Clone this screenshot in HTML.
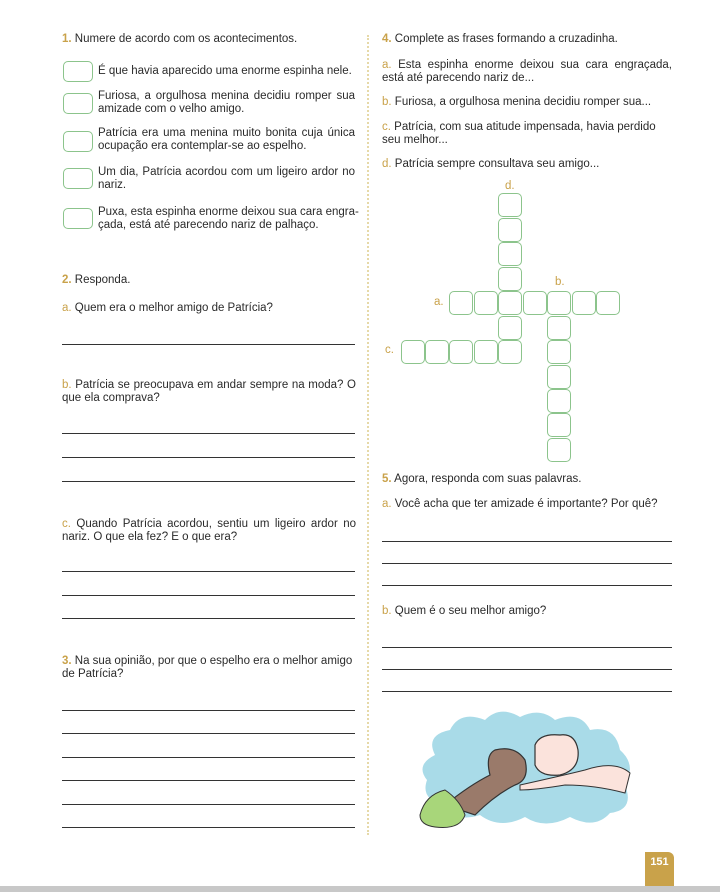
<!DOCTYPE html>
<html><head><meta charset="utf-8"><style>
body{margin:0;width:720px;height:892px;background:#fff;position:relative;overflow:hidden;font-family:"Liberation Sans",sans-serif;color:#2a2a2a;font-size:11.5px;line-height:13px}
.a{position:absolute}
.n{color:#c9a24a;font-weight:bold}
.l{color:#c9a24a}
.u{position:absolute;height:1px;background:#333}
.bx{position:absolute;width:28px;height:19px;border:1.3px solid #8cc48c;border-radius:5px}
.c{position:absolute;border:1.3px solid #8cc48c;border-radius:5px;box-sizing:border-box;width:24px;height:24px}
.j{text-align:justify}
</style></head><body>
<div class="a" style="left:367px;top:35px;height:800px;border-left:2px dotted #e6d9a8"></div>

<div class="a" style="left:62px;top:33px"><span class="n">1.</span> Numere de acordo com os acontecimentos.</div>
<div class="bx" style="left:63px;top:61px"></div><div class="a" style="left:98px;top:65px">É que havia aparecido uma enorme espinha nele.</div>
<div class="bx" style="left:63px;top:93px"></div><div class="a j" style="left:98px;top:90px;width:257px">Furiosa, a orgulhosa menina decidiu romper sua amizade com o velho amigo.</div>
<div class="bx" style="left:63px;top:131px"></div><div class="a j" style="left:98px;top:127px;width:257px">Patrícia era uma menina muito bonita cuja única ocupação era contemplar-se ao espelho.</div>
<div class="bx" style="left:63px;top:168px"></div><div class="a j" style="left:98px;top:166px;width:257px">Um dia, Patrícia acordou com um ligeiro ardor no nariz.</div>
<div class="bx" style="left:63px;top:208px"></div><div class="a" style="left:98px;top:206px;width:262px">Puxa, esta espinha enorme deixou sua cara engra-<br>çada, está até parecendo nariz de palhaço.</div>

<div class="a" style="left:62px;top:274px"><span class="n">2.</span> Responda.</div>
<div class="a" style="left:62px;top:302px"><span class="l">a.</span> Quem era o melhor amigo de Patrícia?</div>
<div class="u" style="left:62px;top:344px;width:293px"></div>
<div class="a j" style="left:62px;top:379px;width:294px"><span class="l">b.</span> Patrícia se preocupava em andar sempre na moda? O que ela comprava?</div>
<div class="u" style="left:62px;top:433px;width:293px"></div>
<div class="u" style="left:62px;top:457px;width:293px"></div>
<div class="u" style="left:62px;top:481px;width:293px"></div>
<div class="a j" style="left:62px;top:518px;width:294px"><span class="l">c.</span> Quando Patrícia acordou, sentiu um ligeiro ardor no nariz. O que ela fez? E o que era?</div>
<div class="u" style="left:62px;top:571px;width:293px"></div>
<div class="u" style="left:62px;top:595px;width:293px"></div>
<div class="u" style="left:62px;top:618px;width:293px"></div>
<div class="a" style="left:62px;top:655px;width:300px"><span class="n">3.</span> Na sua opinião, por que o espelho era o melhor amigo de Patrícia?</div>
<div class="u" style="left:62px;top:710px;width:293px"></div>
<div class="u" style="left:62px;top:733px;width:293px"></div>
<div class="u" style="left:62px;top:757px;width:293px"></div>
<div class="u" style="left:62px;top:780px;width:293px"></div>
<div class="u" style="left:62px;top:804px;width:293px"></div>
<div class="u" style="left:62px;top:827px;width:293px"></div>

<div class="a" style="left:382px;top:33px"><span class="n">4.</span> Complete as frases formando a cruzadinha.</div>
<div class="a j" style="left:382px;top:59px;width:290px"><span class="l">a.</span> Esta espinha enorme deixou sua cara engraçada, está até parecendo nariz de...</div>
<div class="a" style="left:382px;top:96px"><span class="l">b.</span> Furiosa, a orgulhosa menina decidiu romper sua...</div>
<div class="a" style="left:382px;top:121px;width:292px"><span class="l">c.</span> Patrícia, com sua atitude impensada, havia perdido seu melhor...</div>
<div class="a" style="left:382px;top:158px"><span class="l">d.</span> Patrícia sempre consultava seu amigo...</div>

<div class="a l" style="left:505px;top:180px">d.</div>
<div class="a l" style="left:434px;top:296px">a.</div>
<div class="a l" style="left:555px;top:276px">b.</div>
<div class="a l" style="left:385px;top:344px">c.</div>
<div class="c" style="left:498px;top:193px"></div>
<div class="c" style="left:498px;top:218px"></div>
<div class="c" style="left:498px;top:242px"></div>
<div class="c" style="left:498px;top:267px"></div>
<div class="c" style="left:449px;top:291px"></div>
<div class="c" style="left:474px;top:291px"></div>
<div class="c" style="left:498px;top:291px"></div>
<div class="c" style="left:523px;top:291px"></div>
<div class="c" style="left:547px;top:291px"></div>
<div class="c" style="left:572px;top:291px"></div>
<div class="c" style="left:596px;top:291px"></div>
<div class="c" style="left:498px;top:316px"></div>
<div class="c" style="left:401px;top:340px"></div>
<div class="c" style="left:425px;top:340px"></div>
<div class="c" style="left:449px;top:340px"></div>
<div class="c" style="left:474px;top:340px"></div>
<div class="c" style="left:498px;top:340px"></div>
<div class="c" style="left:547px;top:316px"></div>
<div class="c" style="left:547px;top:340px"></div>
<div class="c" style="left:547px;top:365px"></div>
<div class="c" style="left:547px;top:389px"></div>
<div class="c" style="left:547px;top:413px"></div>
<div class="c" style="left:547px;top:438px"></div>

<div class="a" style="left:382px;top:473px"><span class="n">5.</span> Agora, responda com suas palavras.</div>
<div class="a" style="left:382px;top:498px"><span class="l">a.</span> Você acha que ter amizade é importante? Por quê?</div>
<div class="u" style="left:382px;top:541px;width:290px"></div>
<div class="u" style="left:382px;top:563px;width:290px"></div>
<div class="u" style="left:382px;top:585px;width:290px"></div>
<div class="a" style="left:382px;top:605px"><span class="l">b.</span> Quem é o seu melhor amigo?</div>
<div class="u" style="left:382px;top:647px;width:290px"></div>
<div class="u" style="left:382px;top:669px;width:290px"></div>
<div class="u" style="left:382px;top:691px;width:290px"></div>

<svg class="a" style="left:415px;top:705px" width="222" height="125" viewBox="0 0 222 125">
<path d="M20 50 Q10 30 35 25 Q45 5 70 15 Q85 0 105 12 Q125 2 140 15 Q165 5 175 25 Q200 20 205 45 Q222 60 210 80 Q220 105 195 108 Q180 125 155 112 Q130 125 110 112 Q85 125 65 110 Q40 118 30 100 Q5 95 12 75 Q0 60 20 50Z" fill="#a9dbe8"/>
<path d="M105 80 Q150 70 170 65 Q200 55 215 68 L210 88 Q180 80 150 80 Q120 85 105 85Z" fill="#fbe3dc" stroke="#333" stroke-width="1"/>
<path d="M120 40 Q125 28 145 30 Q160 28 163 45 Q165 65 145 70 Q125 72 120 60Z" fill="#fbe3dc" stroke="#333" stroke-width="1.2"/>
<path d="M30 100 Q55 80 75 70 Q70 50 80 45 Q100 40 110 55 Q115 75 100 80 Q80 90 60 110Z" fill="#9a7a6a" stroke="#333" stroke-width="1.2"/>
<path d="M5 110 Q10 90 30 85 Q45 95 50 110 Q45 125 20 122 Q5 120 5 110Z" fill="#a8d67a" stroke="#333" stroke-width="1"/>
</svg>

<div class="a" style="left:645px;top:852px;width:29px;height:36px;background:#c9a24a;border-radius:0 6px 0 0;color:#fff;font-weight:bold;font-size:11px;text-align:center;line-height:20px">151</div>
<div class="a" style="left:0;top:886px;width:720px;height:6px;background:#c8c8c8"></div>
</body></html>
